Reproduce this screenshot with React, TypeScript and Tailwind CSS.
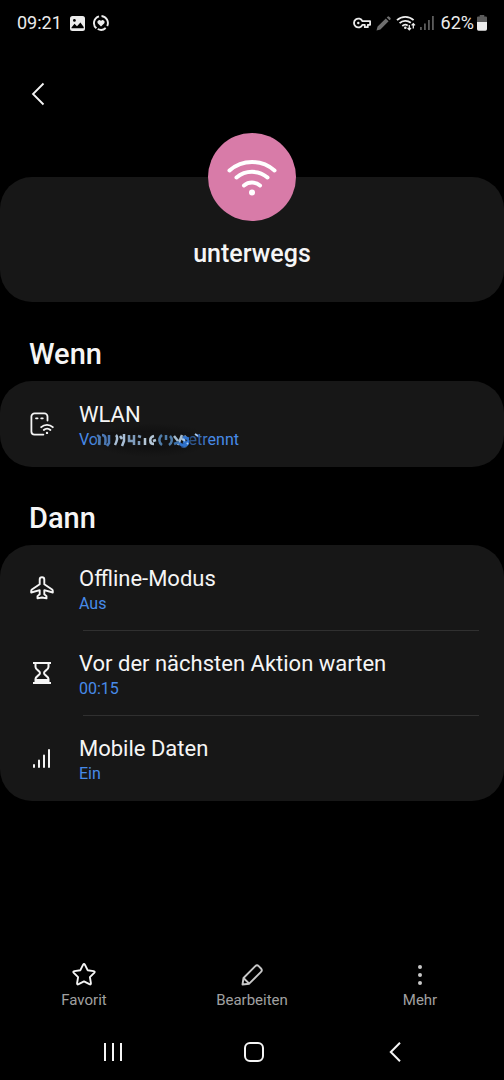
import type { ReactNode } from "react";

type Step = { icon: ReactNode; title: string; value: ReactNode };

function BackIcon() {
  return (
    <svg width="14" height="24" viewBox="0 0 14 24" fill="none" stroke="currentColor" strokeWidth="1.8">
      <path d="M12.5 1.5 2 12l10.5 10.5" />
    </svg>
  );
}

function StatusBar() {
  return (
    <div className="flex h-[46px] items-center justify-between px-[17px] text-lg text-[#ececec]">
      <div className="flex items-center gap-2">
        <span>09:21</span>
        {/* Gallery */}
        <svg width="15" height="15" viewBox="0 0 15 15">
          <rect width="15" height="15" rx="2.5" fill="#ececec" />
          <circle cx="4.4" cy="4.4" r="1.4" fill="#000" />
          <path d="M1.5 11.5 4.5 7.8 7 10.3l3.4-3.8 3.3 4.5v1.2H1.5z" fill="#000" />
        </svg>
        {/* Device care */}
        <svg width="16" height="16" viewBox="0 0 16 16" fill="none">
          <path
            d="M6 1.3a7 7 0 0 0-2.6 12M8.5 1a7 7 0 0 1 5.7 10M12.700 13a7 7 0 0 1-8 1"
            stroke="#ececec"
            strokeWidth="1.9"
          />
          <path d="M8 11.6 4.700 8.300a1.900 1.900 0 0 1 3.300-2.200 1.900 1.900 0 0 1 3.300 2.200z" fill="#ececec" />
        </svg>
      </div>
      <div className="flex items-center">
        {/* VPN key */}
        <svg width="18" height="12" viewBox="0 0 18 12" fill="none" stroke="#ececec" strokeWidth="1.8">
          <path d="M9.4 4.2A4.4 4.4 0 1 0 9.4 7.8h2.4v2.4h3V7.8h2.3V4.2z" strokeLinejoin="round" />
          <circle cx="5.3" cy="6" r="1.2" fill="#ececec" stroke="none" />
        </svg>
        <svg className="ml-[5px]" width="15" height="15" viewBox="0 0 15 15" fill="#6e6e6e">
          <path d="M.5 14.5 1.6 10.6 9.8 2.4l2.8 2.8-8.2 8.2zM10.7 1.5l.8-.8a1.2 1.2 0 0 1 1.7 0l1.1 1.1a1.2 1.2 0 0 1 0 1.7l-.8.8z" />
        </svg>
        <svg className="ml-[5px]" width="20" height="16" viewBox="0 0 20 16" fill="none" stroke="#ececec" strokeWidth="1.8">
          <path d="M1 5.2a12 12 0 0 1 16.6 0M3.6 8.2a8.3 8.3 0 0 1 11.2-.4M6.3 11a4.5 4.5 0 0 1 5.4-.6" />
          <circle cx="9.3" cy="12.7" r="1.3" fill="#ececec" stroke="none" />
          <path d="M13.3 10v4.6M11.6 13l1.7 1.8L15 13M17.3 13.6V8.8M15.6 10.4l1.7-1.8 1.7 1.8" strokeWidth="1.3" />
        </svg>
        <svg className="ml-1" width="14" height="14" viewBox="0 0 14 14" fill="#5c5c5c">
          <path d="M0 11h1.8v3H0zM4 7.5h1.8V14H4zM8 4h1.8v10H8zM12 0h1.8v14H12z" />
        </svg>
        <span className="ml-[7px]">62%</span>
        <svg className="ml-[3px]" width="10" height="16" viewBox="0 0 11 16" preserveAspectRatio="none">
          <path d="M3 0h5v1.6h1.6A1.3 1.3 0 0 1 11 3v4H0V3a1.3 1.3 0 0 1 1.4-1.4H3z" fill="#5c5c5c" />
          <path d="M0 7h11v7a1.7 1.7 0 0 1-1.7 1.7H1.7A1.7 1.7 0 0 1 0 14z" fill="#ececec" />
        </svg>
      </div>
    </div>
  );
}

/* Network name is smudged out between the two words */
function HiddenNetwork() {
  return (
    <span className="relative flex w-[160px] justify-between">
      <span>Von</span>
      <span>getrennt</span>
      <svg className="absolute -top-4 left-0" width="170" height="44" viewBox="0 0 170 44" fill="none">
        <defs>
          <radialGradient id="smudge">
            <stop offset="0.3" stopColor="#0f0f0f" />
            <stop offset="1" stopColor="#0f0f0f" stopOpacity="0" />
          </radialGradient>
        </defs>
        <ellipse cx="72" cy="27" rx="62" ry="17" fill="url(#smudge)" />
        <path d="M21 19h90v14H24z" fill="#121212" />
        <g strokeWidth="2.5">
          <path d="M18 23c2-1 3 1 2 9M23 22c4 0 4 4 3 10M30 22v8l-2 3" stroke="#4c79b4" />
          <path d="M37 22c2 2 1 6-1 10M41 23l2 3M45 21v7l-2 5" stroke="#a9bfd6" />
          <path d="M50 22v6h4M55 22v10M59 23l3 1M60 28v4" stroke="#7f9cbb" />
          <path d="M66 25v7M75 23c-5 1-5 8 0 8M77 27l-3 1" stroke="#b4c6d6" />
          <path d="M83 22c-4 3-3 8 0 10M87 22v5M91 23c3 3 2 7-1 9" stroke="#4f7ca8" />
          <path d="M95 23l4 5M103 22l-4 10M107 23l-4 4" stroke="#a5bccf" />
          <path d="M95 31l5-2" stroke="#3d70a8" />
        </g>
        <g stroke="#2f72cc" strokeWidth="3">
          <path d="M100 30c4 4 10 3 9-3M104 24l6 2M104 29l4 1" />
        </g>
        <path d="M104 26l2 2M108 31l1-1M116 21l3 2" stroke="#a8cdf5" strokeWidth="2" />
      </svg>
    </span>
  );
}

const conditions: Step[] = [
  {
    title: "WLAN",
    value: <HiddenNetwork />,
    icon: (
      <svg width="24" height="24" viewBox="0 0 24 24" fill="none" stroke="currentColor" strokeWidth="1.8" strokeLinecap="round">
        <path d="M17.5 8.5V4.6A3.2 3.2 0 0 0 14.3 1.4H4.6a3.2 3.2 0 0 0-3.2 3.2v14.8a3.2 3.2 0 0 0 3.2 3.2h8.8" />
        <path d="M6 6.3h1.6M11.2 6.3h1.6" />
        <path d="M11.2 15.2a8.2 8.2 0 0 1 11.6 0M13.8 18a4.8 4.8 0 0 1 6.6 0" />
        <circle cx="17" cy="20.9" r="1.2" fill="currentColor" stroke="none" />
      </svg>
    ),
  },
];

const actions: Step[] = [
  {
    title: "Offline-Modus",
    value: "Aus",
    icon: (
      <svg width="24" height="24" viewBox="0 0 24 24" fill="none" stroke="currentColor" strokeWidth="1.9" strokeLinejoin="round">
        <path d="M9.7 8.3V3.6a2.3 2.3 0 0 1 4.6 0v4.700l7.800 5.200q.7.6.7 1.600v1.400l-8.500-2.300v4l2.200 1.900v2.300L12 21.500l-4.500.9v-2.300l2.200-1.900v-4l-8.500 2.300v-1.400q0-1 .7-1.600z" />
      </svg>
    ),
  },
  {
    title: "Vor der nächsten Aktion warten",
    value: "00:15",
    icon: (
      <svg width="24" height="24" viewBox="0 0 24 24" fill="none" stroke="currentColor" strokeWidth="2">
        <path d="M3 2h18M3 22h18" />
        <path d="M5.500 2v4c0 3 4.500 3.700 4.500 6s-4.500 3-4.500 6v4M18.500 2v4c0 3-4.500 3.700-4.500 6s4.500 3 4.500 6v4" />
        <path d="M5.500 18h13v4h-13z" fill="currentColor" stroke="none" />
      </svg>
    ),
  },
  {
    title: "Mobile Daten",
    value: "Ein",
    icon: (
      <svg width="24" height="24" viewBox="0 0 24 24" fill="none" stroke="currentColor" strokeWidth="2" strokeLinecap="round">
        <path d="M4 19v2M9 14.500V21M14 9.500V21M19 4v17" />
      </svg>
    ),
  },
];

function StepList({ heading, steps }: { heading: string; steps: Step[] }) {
  return (
    <section className="mt-[33px]">
      <h2 className="mb-[9px] px-[29px] text-[29px] leading-9 font-medium">{heading}</h2>
      <ul className="rounded-[32px] bg-[#171717] pt-px">
        {steps.map((step, i) => (
          <li key={step.title}>
            {i > 0 && <hr className="-mt-px mr-[25px] ml-[83px] border-[#303030]" />}
            <button className="flex w-full items-center pt-[19px] pr-6 pb-4 pl-[30px] text-left">
              <span className="w-[49px] shrink-0 pb-1">{step.icon}</span>
              <span className="flex flex-col">
                <span className="text-[22px] leading-7">{step.title}</span>
                <span className="text-base leading-[22px] text-[#478be9]">{step.value}</span>
              </span>
            </button>
          </li>
        ))}
      </ul>
    </section>
  );
}

function ToolButton({ label, children }: { label: string; children: ReactNode }) {
  return (
    <button className="flex flex-col items-center gap-[3px] text-[15px] leading-5 text-[#a0a0a0]">
      {children}
      <span>{label}</span>
    </button>
  );
}

export default function App() {
  return (
    <div className="flex min-h-screen flex-col bg-black font-['Roboto',sans-serif] text-[#f5f5f5]">
      <StatusBar />

      <header className="flex h-24 items-center px-[31px]">
        <button aria-label="Zurück">
          <BackIcon />
        </button>
      </header>

      <main>
        <div className="mt-[35px] mb-[34px] flex flex-col items-center rounded-[32px] bg-[#171717] pb-8">
          <div className="-mt-11 flex size-[88px] items-center justify-center rounded-full bg-[#d87ba8]">
            <svg width="50" height="38" viewBox="0 0 50 38" fill="none" stroke="#fff" strokeWidth="4" strokeLinecap="round">
              <path d="M2.500 12.500a34 34 0 0 1 45 0M9.500 19.500a24 24 0 0 1 31 0M17 27.500a12.500 12.500 0 0 1 16 0" />
              <circle cx="25" cy="34.500" r="3" fill="#fff" stroke="none" />
            </svg>
          </div>
          <h1 className="mt-[17px] text-[25px] leading-8 font-medium">unterwegs</h1>
        </div>

        <StepList heading="Wenn" steps={conditions} />
        <StepList heading="Dann" steps={actions} />
      </main>

      <footer className="mt-auto">
        <div className="grid grid-cols-3">
          <ToolButton label="Favorit">
            <svg width="24" height="24" viewBox="0 0 24 24" fill="none" stroke="#f5f5f5" strokeWidth="1.9" strokeLinejoin="round">
              <path d="M11 1.900q1-1.700 2 0l2.600 5.300 6 .9q1.900.4.6 1.800l-4.300 4.200 1 6q.200 1.900-1.500 1.100L12 18.400l-5.400 2.800q-1.700.8-1.500-1.100l1-6L1.800 9.900Q.5 8.500 2.400 8.100l6-.9z" />
            </svg>
          </ToolButton>
          <ToolButton label="Bearbeiten">
            <svg width="24" height="24" viewBox="0 0 24 24" fill="none" stroke="#c8c8c8" strokeWidth="1.900" strokeLinejoin="round">
              <path d="M2.500 21.500 3.500 15 15.300 3.200q1.700-1.700 3.400 0l2.300 2.300q1.700 1.700 0 3.400L9.200 20.700zM3.500 15l5.700 5.700" />
            </svg>
          </ToolButton>
          <ToolButton label="Mehr">
            <svg width="24" height="24" viewBox="0 0 24 24" fill="#c8c8c8">
              <circle cx="12" cy="4" r="2" />
              <circle cx="12" cy="12" r="2" />
              <circle cx="12" cy="20" r="2" />
            </svg>
          </ToolButton>
        </div>

        <nav className="mt-[14px] grid h-14 grid-cols-3 items-center justify-items-center pr-[38px] pl-[42px]">
          <button aria-label="Letzte Apps">
            <svg width="20" height="20" viewBox="0 0 20 20" stroke="currentColor" strokeWidth="2">
              <path d="M2 1v18M10 1v18M18 1v18" />
            </svg>
          </button>
          <button aria-label="Startseite">
            <svg width="20" height="20" viewBox="0 0 20 20" fill="none" stroke="currentColor" strokeWidth="2">
              <rect x="1" y="1" width="18" height="18" rx="5" />
            </svg>
          </button>
          <button aria-label="Zurück">
            <svg width="12" height="20" viewBox="0 0 12 20" fill="none" stroke="currentColor" strokeWidth="2">
              <path d="M11 .8 1.800 10l9.200 9.200" />
            </svg>
          </button>
        </nav>
      </footer>
    </div>
  );
}
